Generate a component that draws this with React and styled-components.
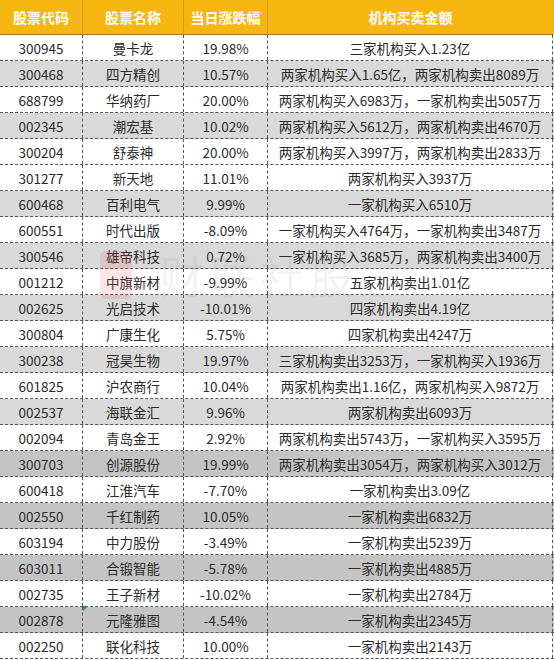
import React from "react";
import styled, { createGlobalStyle } from "styled-components";

const Global = createGlobalStyle`
  html, body { margin: 0; padding: 0; background: #fff; }
  body { font-family: "Noto Sans CJK SC", "Noto Sans", sans-serif; }
`;

const rows = [
  ["300945", "曼卡龙", "19.98%", "三家机构买入1.23亿", 0],
  ["300468", "四方精创", "10.57%", "两家机构买入1.65亿，两家机构卖出8089万", 1],
  ["688799", "华纳药厂", "20.00%", "两家机构买入6983万，一家机构卖出5057万", 0],
  ["002345", "潮宏基", "10.02%", "两家机构买入5612万，两家机构卖出4670万", 1],
  ["300204", "舒泰神", "20.00%", "两家机构买入3997万，两家机构卖出2833万", 0],
  ["301277", "新天地", "11.01%", "两家机构买入3937万", 0],
  ["600468", "百利电气", "9.99%", "一家机构买入6510万", 1],
  ["600551", "时代出版", "-8.09%", "一家机构买入4764万，一家机构卖出3487万", 0],
  ["300546", "雄帝科技", "0.72%", "一家机构买入3685万，两家机构卖出3400万", 1],
  ["001212", "中旗新材", "-9.99%", "五家机构卖出1.01亿", 0],
  ["002625", "光启技术", "-10.01%", "四家机构卖出4.19亿", 1],
  ["300804", "广康生化", "5.75%", "四家机构卖出4247万", 0],
  ["300238", "冠昊生物", "19.97%", "三家机构卖出3253万，一家机构买入1936万", 1],
  ["601825", "沪农商行", "10.04%", "两家机构卖出1.16亿，两家机构买入9872万", 0],
  ["002537", "海联金汇", "9.96%", "两家机构卖出6093万", 1],
  ["002094", "青岛金王", "2.92%", "两家机构卖出5743万，一家机构买入3595万", 0],
  ["300703", "创源股份", "19.99%", "两家机构卖出3054万，两家机构买入3012万", 2],
  ["600418", "江淮汽车", "-7.70%", "一家机构卖出3.09亿", 0],
  ["002550", "千红制药", "10.05%", "一家机构卖出6832万", 2],
  ["603194", "中力股份", "-3.49%", "一家机构卖出5239万", 0],
  ["603011", "合锻智能", "-5.78%", "一家机构卖出4885万", 2],
  ["002735", "王子新材", "-10.02%", "一家机构卖出2784万", 0],
  ["002878", "元隆雅图", "-4.54%", "一家机构卖出2345万", 2],
  ["002250", "联化科技", "10.00%", "一家机构卖出2143万", 0],
];

const shades = ["#ffffff", "#d9d9d9", "#c4c4c4"];
const cols = "83px 101px 84px 285px";

const Table = styled.div`
  position: relative;
  width: 554px;
  display: flex;
  flex-direction: column;
`;

const HeaderRow = styled.div`
  display: grid;
  grid-template-columns: ${cols};
  height: 35px;
  background: #f6b611;
  border-bottom: 1px solid #b07d12;
  box-sizing: border-box;
`;

const HeaderCell = styled.div`
  display: flex;
  align-items: center;
  justify-content: center;
  color: #fff;
  font-weight: 700;
  font-size: 14px;
  border-right: 1px solid #d99a08;
  &:last-child { border-right: none; }
`;

const Row = styled.div`
  display: grid;
  grid-template-columns: ${cols};
  height: 26px;
  box-sizing: border-box;
  background: ${(p) => shades[p.$shade]};
  border-bottom: 1px dashed #555;
  &:last-child { border-bottom: none; }
`;

const Cell = styled.div`
  position: relative;
  display: flex;
  align-items: center;
  justify-content: center;
  font-size: 13.5px;
  color: #2b2b2b;
  white-space: nowrap;
  border-right: 1px dashed #555;
  box-sizing: border-box;
`;

const Marker = styled.span`
  position: absolute;
  left: 0;
  top: -1px;
  width: 0;
  height: 0;
  border-top: 5px solid #1f9a3a;
  border-right: 5px solid transparent;
`;

const Watermark = styled.div`
  position: absolute;
  left: 100px;
  top: 243px;
  display: flex;
  align-items: center;
  gap: 28px;
  pointer-events: none;
`;

const Logo = styled.div`
  width: 32px;
  height: 48px;
  border-radius: 6px;
  background: rgba(230, 80, 90, 0.15);
`;

const MarkText = styled.span`
  font-size: 44px;
  letter-spacing: 6px;
  color: rgba(120, 120, 120, 0.1);
  font-family: "Noto Sans CJK SC", sans-serif;
`;

export default function App() {
  return (
    <>
      <Global />
      <Table>
        <HeaderRow>
          <HeaderCell>股票代码</HeaderCell>
          <HeaderCell>股票名称</HeaderCell>
          <HeaderCell>当日涨跌幅</HeaderCell>
          <HeaderCell>机构买卖金额</HeaderCell>
        </HeaderRow>
        {rows.map(([code, name, pct, desc, shade]) => (
          <Row key={code} $shade={shade}>
            <Cell>{code}</Cell>
            <Cell>
              {code === "002878" && <Marker />}
              {name}
            </Cell>
            <Cell>{pct}</Cell>
            <Cell>{desc}</Cell>
          </Row>
        ))}
        <Watermark aria-hidden="true">
          <Logo />
          <MarkText>财联社股</MarkText>
        </Watermark>
      </Table>
    </>
  );
}
